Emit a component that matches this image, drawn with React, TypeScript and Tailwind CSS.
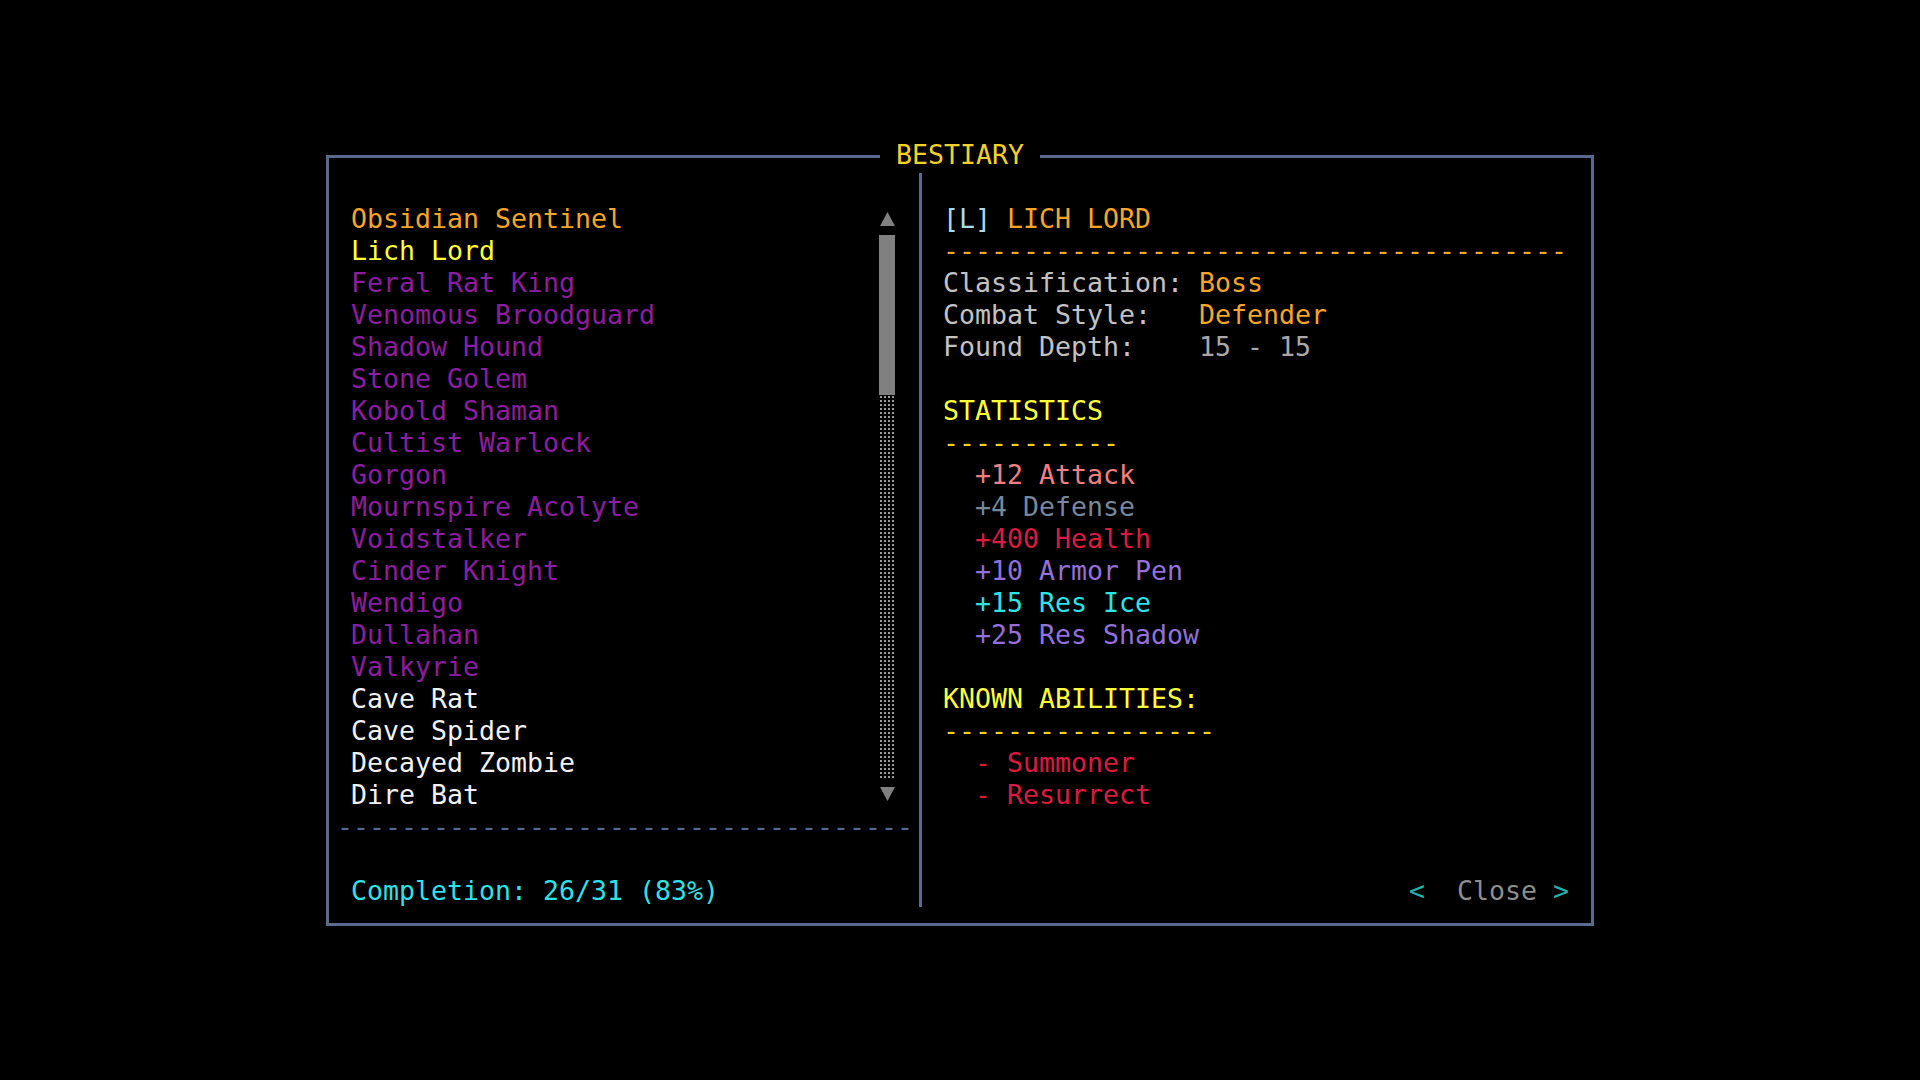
import React from 'react';

type Seg = { text: string; color: string };

const ORANGE = '#f5a52a';
const YELLOW = '#ffff3a';
const GOLD = '#f4c82c';
const PURPLE = '#8b1e9e';
const WHITE = '#f2f2f2';
const SILVER = '#c2c2c2';
const CRIMSON = '#dc1a40';
const SLATE = '#5b6a8c';

const monsters: { name: string; color: string }[] = [
  { name: 'Obsidian Sentinel', color: ORANGE },
  { name: 'Lich Lord', color: YELLOW },
  { name: 'Feral Rat King', color: PURPLE },
  { name: 'Venomous Broodguard', color: PURPLE },
  { name: 'Shadow Hound', color: PURPLE },
  { name: 'Stone Golem', color: PURPLE },
  { name: 'Kobold Shaman', color: PURPLE },
  { name: 'Cultist Warlock', color: PURPLE },
  { name: 'Gorgon', color: PURPLE },
  { name: 'Mournspire Acolyte', color: PURPLE },
  { name: 'Voidstalker', color: PURPLE },
  { name: 'Cinder Knight', color: PURPLE },
  { name: 'Wendigo', color: PURPLE },
  { name: 'Dullahan', color: PURPLE },
  { name: 'Valkyrie', color: PURPLE },
  { name: 'Cave Rat', color: WHITE },
  { name: 'Cave Spider', color: WHITE },
  { name: 'Decayed Zombie', color: WHITE },
  { name: 'Dire Bat', color: WHITE },
];

const details: Seg[][] = [
  [
    { text: '[L] ', color: '#acd9ec' },
    { text: 'LICH LORD', color: ORANGE },
  ],
  [{ text: '-'.repeat(39), color: ORANGE }],
  [
    { text: 'Classification: ', color: SILVER },
    { text: 'Boss', color: ORANGE },
  ],
  [
    { text: 'Combat Style:   ', color: SILVER },
    { text: 'Defender', color: ORANGE },
  ],
  [
    { text: 'Found Depth:    ', color: SILVER },
    { text: '15 - 15', color: '#a8a8a8' },
  ],
  [],
  [{ text: 'STATISTICS', color: YELLOW }],
  [{ text: '-'.repeat(11), color: GOLD }],
  [{ text: '  +12 Attack', color: '#f08080' }],
  [{ text: '  +4 Defense', color: '#778899' }],
  [{ text: '  +400 Health', color: CRIMSON }],
  [{ text: '  +10 Armor Pen', color: '#9370db' }],
  [{ text: '  +15 Res Ice', color: '#2ee3e6' }],
  [{ text: '  +25 Res Shadow', color: '#9370db' }],
  [],
  [{ text: 'KNOWN ABILITIES:', color: YELLOW }],
  [{ text: '-'.repeat(17), color: GOLD }],
  [{ text: '  - Summoner', color: CRIMSON }],
  [{ text: '  - Resurrect', color: CRIMSON }],
];

const Row: React.FC<{ segs: Seg[] }> = ({ segs }) => (
  <div className="h-[32px] whitespace-pre">
    {segs.length === 0 ? ' ' : segs.map((s, i) => (
      <span key={i} style={{ color: s.color }}>{s.text}</span>
    ))}
  </div>
);

const Scrollbar: React.FC = () => (
  <div className="flex w-[16px] flex-col">
    <div className="flex h-[32px] items-center justify-center">
      <svg width="15" height="14" viewBox="0 0 15 14">
        <polygon points="7.5,0 15,14 0,14" fill="#808080" />
      </svg>
    </div>
    <div className="h-[160px] w-[16px] bg-[#808080]" />
    <div className="h-[384px] w-[16px] bg-[radial-gradient(circle,#9a9a9a_1px,transparent_1.3px)] bg-[length:4px_4px]" />
    <div className="flex h-[32px] items-center justify-center">
      <svg width="15" height="15" viewBox="0 0 15 15">
        <polygon points="0,0 15,0 7.5,14" fill="#808080" />
      </svg>
    </div>
  </div>
);

export default function App() {
  return (
    <div className="flex h-[1080px] w-full items-center justify-center bg-black font-['DejaVu_Sans_Mono','Liberation_Mono',monospace] text-[26.58px] leading-[32px]">
      <div className="relative h-[771px] w-[1268px] border-[3px] border-[#5b6a8c] pb-[16px] pl-[8px] pr-[22px] pt-[15px]">
        <div className="absolute left-1/2 top-[-19px] -translate-x-1/2 bg-black px-[16px] text-[#f6cf2c]">
          BESTIARY
        </div>

        <div className="flex">
          {/* monster list */}
          <div className="flex w-[582px] flex-col pt-[30px]">
            <div className="flex">
              <div className="flex-1 pl-[14px]">
                {monsters.map((m) => (
                  <div key={m.name} className="h-[32px] whitespace-pre" style={{ color: m.color }}>
                    {m.name}
                  </div>
                ))}
              </div>
              <div className="mr-[24px]">
                <Scrollbar />
              </div>
            </div>
            <div className="h-[32px] overflow-hidden whitespace-pre" style={{ color: SLATE }}>
              {'-'.repeat(36)}
            </div>
            <div className="h-[32px]" />
            <div className="h-[32px] whitespace-pre pl-[14px] text-[#30e2e8]">Completion: 26/31 (83%)</div>
          </div>

          <div className="w-[3px] self-stretch bg-[#5b6a8c]" />

          {/* details */}
          <div className="flex flex-1 flex-col pl-[21px] pt-[30px]">
            {details.map((segs, i) => (
              <Row key={i} segs={segs} />
            ))}
            <div className="mt-[64px] flex h-[32px] justify-end whitespace-pre">
              <span className="text-[#20b2aa]">{'<'}</span>
              <span className="text-[#8e8e8e]">{'  Close '}</span>
              <span className="text-[#20b2aa]">{'>'}</span>
            </div>
          </div>
        </div>
      </div>
    </div>
  );
}
